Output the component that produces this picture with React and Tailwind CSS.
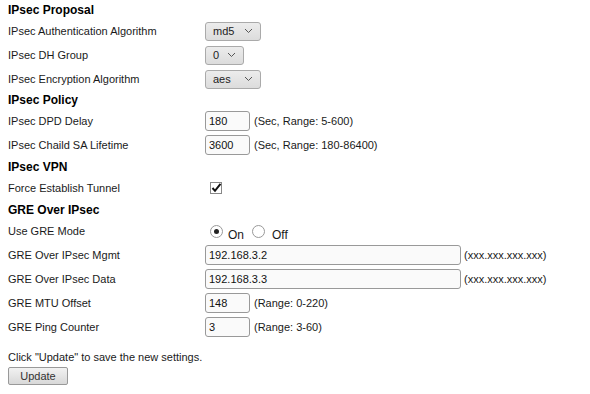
import { useState } from 'react';

const font = { fontFamily: '"Liberation Sans", Arial, sans-serif' };

function Heading({ children, h }) {
  return (
    <div className={`flex items-center ${h} text-[12px] font-bold text-black`}>{children}</div>
  );
}

function Row({ label, children, h = 'h-[24px]' }) {
  return (
    <div className={`flex items-center ${h}`}>
      <div className="w-[197px] shrink-0 text-[11px] text-[#1a1a1a]">{label}</div>
      <div className="flex items-center gap-[4px] text-[11px] text-[#1a1a1a]">{children}</div>
    </div>
  );
}

function FakeSelect({ value, w }) {
  return (
    <div
      className={`flex h-[19px] ${w} items-center justify-between rounded-[3px] border border-[#aaa] bg-gradient-to-b from-[#ececec] to-[#dcdcdc] pl-[7px] pr-[7px] text-[11px] text-[#222]`}
    >
      <span>{value}</span>
      <svg width="9" height="6" viewBox="0 0 9 6" className="text-[#555]">
        <path d="M1 1 L4.5 4.5 L8 1" fill="none" stroke="currentColor" strokeWidth="1" />
      </svg>
    </div>
  );
}

function TextBox({ value, w = 'w-[45px]' }) {
  return (
    <div className={`flex h-[20px] ${w} items-center rounded-[3px] border border-[#999] bg-[#fafafa] px-[3px] text-[11px] text-[#111]`}>
      {value}
    </div>
  );
}

function Radio({ checked }) {
  return (
    <span className="flex h-[13px] w-[13px] items-center justify-center rounded-full border border-[#999] bg-white">
      {checked && <span className="h-[5px] w-[5px] rounded-full bg-[#222]" />}
    </span>
  );
}

export default function App() {
  const [greOn] = useState(true);

  return (
    <div className="h-[394px] w-[590px] bg-white pl-[8px]" style={font}>
      <Heading h="h-[19px]">IPsec Proposal</Heading>
      <Row label="IPsec Authentication Algorithm">
        <FakeSelect value="md5" w="w-[56px]" />
      </Row>
      <Row label="IPsec DH Group">
        <FakeSelect value="0" w="w-[39px]" />
      </Row>
      <Row label="IPsec Encryption Algorithm">
        <FakeSelect value="aes" w="w-[56px]" />
      </Row>

      <Heading h="h-[18px]">IPsec Policy</Heading>
      <Row label="IPsec DPD Delay">
        <TextBox value="180" />
        <span>(Sec, Range: 5-600)</span>
      </Row>
      <Row label="IPsec Chaild SA Lifetime">
        <TextBox value="3600" />
        <span>(Sec, Range: 180-86400)</span>
      </Row>

      <Heading h="h-[19px]">IPsec VPN</Heading>
      <Row label="Force Establish Tunnel">
        <span className="ml-[5px] flex h-[12px] w-[13px] items-end">
          <svg width="13" height="12" viewBox="0 0 13 12">
            <rect x="0.5" y="0.5" width="11" height="11" fill="white" stroke="#888" />
            <path d="M2.5 6 L5 8.8 L10.5 1.8" fill="none" stroke="#111" strokeWidth="2" />
          </svg>
        </span>
      </Row>

      <Heading h="h-[20px]">GRE Over IPsec</Heading>
      <Row label="Use GRE Mode" h="h-[23px]">
        <span className="ml-[5px] flex items-center">
          <Radio checked={greOn} />
          <span className="ml-[5px] mt-[7px] text-[12px]">On</span>
          <span className="ml-[8px]"><Radio checked={!greOn} /></span>
          <span className="ml-[7px] mt-[7px] text-[12px]">Off</span>
        </span>
      </Row>
      <Row label="GRE Over IPsec Mgmt">
        <TextBox value="192.168.3.2" w="w-[256px]" />
        <span className="-ml-[1px]">(xxx.xxx.xxx.xxx)</span>
      </Row>
      <Row label="GRE Over IPsec Data">
        <TextBox value="192.168.3.3" w="w-[256px]" />
        <span className="-ml-[1px]">(xxx.xxx.xxx.xxx)</span>
      </Row>
      <Row label="GRE MTU Offset">
        <TextBox value="148" />
        <span>(Range: 0-220)</span>
      </Row>
      <Row label="GRE Ping Counter">
        <TextBox value="3" />
        <span>(Range: 3-60)</span>
      </Row>

      <div className="mt-[11px] flex h-[14px] items-center text-[11px] text-[#1a1a1a]">
        Click "Update" to save the new settings.
      </div>
      <button className="mt-[3px] flex h-[18px] w-[60px] items-center justify-center rounded-[2px] border border-[#999] bg-gradient-to-b from-[#f2f2f2] to-[#d8d8d8] text-[11px] text-[#333]">
        Update
      </button>
    </div>
  );
}
